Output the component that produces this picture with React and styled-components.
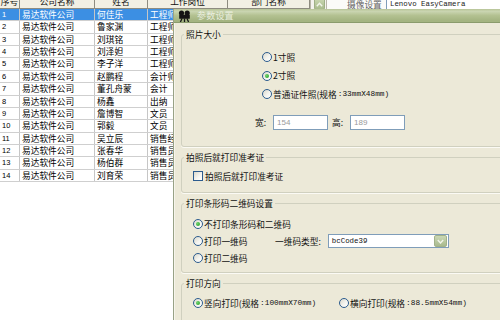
import React from 'react';
import styled, { createGlobalStyle } from 'styled-components';

const CJK = `"Noto Sans CJK SC", "Noto Sans", sans-serif`;
const MONO = `"Liberation Mono", "DejaVu Sans Mono", monospace`;
const COLS = '20px 75px 53px 80px 82px';

const employees = [
    ['1', '何佳乐', '工程师'],
    ['2', '鲁家渊', '工程师'],
    ['3', '刘琪铭', '工程师'],
    ['4', '刘泽妲', '工程师'],
    ['5', '李子洋', '工程师'],
    ['6', '赵鹏程', '会计师'],
    ['7', '董孔舟蒙', '会计'],
    ['8', '杨鑫', '出纳'],
    ['9', '詹博智', '文员'],
    ['10', '郭毅', '文员'],
    ['11', '吴立辰', '销售经理'],
    ['12', '张春华', '销售员'],
    ['13', '杨伯群', '销售员'],
    ['14', '刘育荣', '销售员'],
];

const GlobalStyle = createGlobalStyle`
    html, body {
        margin: 0;
        padding: 0;
        background: #fff;
        font-family: ${CJK};
    }
`;

const CameraIcon = () => (
    <svg width="13" height="12" viewBox="0 0 13 12">
        <circle cx="3.5" cy="3" r="2.6" fill="#141414" />
        <circle cx="9.2" cy="3" r="2.6" fill="#141414" />
        <rect x="1.2" y="4.8" width="10.6" height="4" rx="0.6" fill="#141414" />
        <path d="M4 8.5 L2.4 12 M6.5 8.5 V12 M9 8.5 L10.6 12" stroke="#141414" strokeWidth="1.3" />
    </svg>
);

const Chevron = ({ up }) => (
    <svg width="7" height="5" viewBox="0 0 7 5">
        <path d={up ? 'M0.8 4.2 L3.5 1.2 L6.2 4.2' : 'M0.8 1 L3.5 4 L6.2 1'} fill="none" stroke="#f2f5ea" strokeWidth="1.4" />
    </svg>
);

const App = () => {
    return (
        <Screen>
            <GlobalStyle />
            <Backdrop>
                <Grid>
                    <HeaderRow>
                        <HeaderCell>序号</HeaderCell>
                        <HeaderCell>公司名称</HeaderCell>
                        <HeaderCell>姓名</HeaderCell>
                        <HeaderCell>工作岗位</HeaderCell>
                        <HeaderCell>部门名称</HeaderCell>
                    </HeaderRow>
                    {employees.map(([no, name, job], i) => (
                        <Row key={no} $selected={i === 0}>
                            <NumCell>{no}</NumCell>
                            <Cell>易达软件公司</Cell>
                            <Cell>{name}</Cell>
                            <Cell>{job}</Cell>
                            <Cell />
                        </Row>
                    ))}
                </Grid>
                <ScrollCol>
                    <ScrollButton><Chevron up /></ScrollButton>
                </ScrollCol>
                <SidePanel>
                    <SideLabel>摄像设置</SideLabel>
                    <CameraBox>Lenovo EasyCamera</CameraBox>
                </SidePanel>
            </Backdrop>

            <Dialog>
                <TitleBar>
                    <CameraIcon />
                    <TitleText>参数设置</TitleText>
                </TitleBar>
                <Body>
                    <Group $h={113}>
                        <GroupTitle>照片大小</GroupTitle>
                        <RadioList $mt={8} $ml={80}>
                            <RadioRow $h={18.5}><RadioDot />1寸照</RadioRow>
                            <RadioRow $h={18.5}><RadioDot $on />2寸照</RadioRow>
                            <RadioRow $h={18.5}><RadioDot />普通证件照(规格<Mono>:33mmX48mm)</Mono></RadioRow>
                        </RadioList>
                        <DimRow>
                            <DimLabel>宽:</DimLabel>
                            <NumInput>154</NumInput>
                            <DimLabel $ml={4}>高:</DimLabel>
                            <NumInput>189</NumInput>
                        </DimRow>
                    </Group>

                    <Group $h={36}>
                        <GroupTitle>拍照后就打印准考证</GroupTitle>
                        <CheckRow>
                            <CheckBox />
                            拍照后就打印准考证
                        </CheckRow>
                    </Group>

                    <Group $h={70}>
                        <GroupTitle>打印条形码二维码设置</GroupTitle>
                        <RadioList $mt={6.5} $ml={11}>
                            <RadioRow><RadioDot $on />不打印条形码和二维码</RadioRow>
                            <Line>
                                <RadioRow $w={82}><RadioDot />打印一维码</RadioRow>
                                <TypeLabel>一维码类型:</TypeLabel>
                                <Select>
                                    <SelectValue>bcCode39</SelectValue>
                                    <DropButton><Chevron /></DropButton>
                                </Select>
                            </Line>
                            <RadioRow><RadioDot />打印二维码</RadioRow>
                        </RadioList>
                    </Group>

                    <Group $h={60}>
                        <GroupTitle>打印方向</GroupTitle>
                        <RadioList $mt={5.5} $ml={11}>
                            <Line>
                                <RadioRow $w={146}><RadioDot $on />竖向打印(规格<Mono>:100mmX70mm)</Mono></RadioRow>
                                <RadioRow><RadioDot />横向打印(规格<Mono>:88.5mmX54mm)</Mono></RadioRow>
                            </Line>
                        </RadioList>
                    </Group>
                </Body>
            </Dialog>
        </Screen>
    );
}

export default App;

const Screen = styled.div`
    position: relative;
    width: 500px;
    height: 320px;
    overflow: hidden;
    background: #fff;
`;

const Backdrop = styled.div`
    display: flex;
    margin-top: -5px;
`;

const Grid = styled.div`
    width: 310px;
    flex: none;
`;

const HeaderRow = styled.div`
    display: grid;
    grid-template-columns: ${COLS};
    height: 14px;
    box-sizing: border-box;
    background: #f2f0e4;
    border-bottom: 1px solid #8e8c80;
`;

const HeaderCell = styled.div`
    border-right: 1px solid #8e8c80;
    font-size: 8.7px;
    line-height: 13px;
    text-align: center;
    color: #111;
    white-space: nowrap;
    overflow: hidden;
`;

const Row = styled.div`
    display: grid;
    grid-template-columns: ${COLS};
    height: 12.36px;
    box-sizing: border-box;
    border-bottom: 1px solid #cfcfcf;
    background: ${p => p.$selected ? '#3c8fe3' : '#fff'};
    color: ${p => p.$selected ? '#fff' : '#000'};
`;

const Cell = styled.div`
    border-right: 1px solid #c6c6c6;
    padding-left: 2px;
    font-size: 8.7px;
    line-height: 11.4px;
    white-space: nowrap;
    overflow: hidden;
`;

const NumCell = styled(Cell)`
    font-family: "Liberation Sans", sans-serif;
    font-size: 7.5px;
`;

const ScrollCol = styled.div`
    width: 16px;
    flex: none;
    height: 200px;
    background: #f4f3ee;
    border-left: 1px solid #b8b6a8;
    box-sizing: border-box;
    display: flex;
    flex-direction: column;
    align-items: flex-end;
    padding: 3px 1px 0 0;
`;

const ScrollButton = styled.div`
    width: 9px;
    height: 10px;
    display: flex;
    align-items: center;
    justify-content: center;
    background: linear-gradient(#c9d7b0, #a9bb8d);
    border: 1px solid #9fb086;
    border-radius: 2px;
`;

const SidePanel = styled.div`
    flex: 1;
    height: 14px;
    display: flex;
    align-items: center;
    background: #fbfbf8;
    border-left: 1px solid #b8b6a8;
    box-sizing: border-box;
    padding-top: 4px;
`;

const SideLabel = styled.div`
    margin-left: 20px;
    width: 39px;
    font-size: 8.7px;
    color: #666;
    white-space: nowrap;
`;

const CameraBox = styled.div`
    flex: 1;
    height: 100%;
    border-left: 1px solid #7f9db9;
    background: #fff;
    padding-left: 3px;
    font-family: ${MONO};
    font-size: 7.4px;
    line-height: 10px;
    color: #222;
    white-space: nowrap;
`;

const Dialog = styled.div`
    position: absolute;
    left: 173px;
    top: 9px;
    width: 330px;
    height: 330px;
    background: #ece9d8;
    border-left: 1px solid #98a286;
    box-shadow: inset 1px 0 0 #f7f5ec;
    display: flex;
    flex-direction: column;
`;

const TitleBar = styled.div`
    height: 19px;
    box-sizing: border-box;
    display: flex;
    align-items: center;
    gap: 6px;
    padding-left: 4px;
    background: linear-gradient(#b7c497 0%, #cad5b1 18%, #b3c191 50%, #a4b481 88%);
    border-bottom: 1px solid #8a9b6c;
`;

const TitleText = styled.div`
    font-size: 9px;
    color: #f3f6ea;
    opacity: 0.85;
    letter-spacing: 0.2px;
`;

const Body = styled.div`
    display: flex;
    flex-direction: column;
    gap: 10px;
    padding: 11px 0 0 7px;
`;

const Group = styled.div`
    height: ${p => p.$h}px;
    box-sizing: border-box;
    border: 1px solid #d0d0bf;
    border-radius: 3px;
    box-shadow: 0 1px 0 #fbfaf4;
    display: flex;
    flex-direction: column;
    align-items: flex-start;
`;

const GroupTitle = styled.div`
    margin: -6px 0 0 2px;
    padding: 0 2px;
    background: #ece9d8;
    font-size: 8.7px;
    line-height: 11px;
    color: #111;
    white-space: nowrap;
`;

const RadioList = styled.div`
    display: flex;
    flex-direction: column;
    margin: ${p => p.$mt}px 0 0 ${p => p.$ml}px;
`;

const Line = styled.div`
    display: flex;
    align-items: center;
`;

const RadioRow = styled.div`
    display: flex;
    align-items: center;
    gap: 1px;
    height: ${p => p.$h || 17}px;
    width: ${p => p.$w ? `${p.$w}px` : 'auto'};
    font-size: 8.7px;
    color: #111;
    white-space: nowrap;
`;

const RadioDot = styled.span`
    width: 10px;
    height: 10px;
    box-sizing: border-box;
    flex: none;
    border: 1px solid #2b5b8e;
    border-radius: 50%;
    background: linear-gradient(135deg, #d9d7cb 0%, #f4f4ef 55%, #fff 100%);
    display: flex;
    align-items: center;
    justify-content: center;

    &::after {
        content: '';
        width: 4px;
        height: 4px;
        border-radius: 50%;
        background: ${p => p.$on ? 'radial-gradient(circle at 35% 35%, #6fd36f, #1f9a1f)' : 'transparent'};
    }
`;

const Mono = styled.span`
    font-family: ${MONO};
    font-size: 7.8px;
`;

const DimRow = styled.div`
    display: flex;
    align-items: center;
    margin: 11.5px 0 0 73px;
`;

const DimLabel = styled.div`
    width: 18px;
    margin-left: ${p => p.$ml || 0}px;
    font-size: 8.7px;
    color: #111;
`;

const NumInput = styled.div`
    width: 55px;
    height: 15px;
    box-sizing: border-box;
    border: 1px solid #7f9db9;
    background: #fff;
    padding-left: 3px;
    font-family: "Liberation Sans", sans-serif;
    font-size: 8px;
    line-height: 13px;
    color: #9a9a9a;
`;

const CheckRow = styled.div`
    display: flex;
    align-items: center;
    gap: 2px;
    height: 14px;
    margin: 6px 0 0 11px;
    font-size: 8.7px;
    color: #111;
    white-space: nowrap;
`;

const CheckBox = styled.span`
    width: 10px;
    height: 10px;
    box-sizing: border-box;
    border: 1px solid #2b5b8e;
    background: linear-gradient(135deg, #dad8cc 0%, #f6f6f2 60%, #fff 100%);
`;

const TypeLabel = styled.div`
    font-size: 8.7px;
    color: #111;
    margin-right: 7px;
    white-space: nowrap;
`;

const Select = styled.div`
    width: 121px;
    height: 14px;
    box-sizing: border-box;
    border: 1px solid #7f9db9;
    background: #fff;
    display: flex;
    align-items: center;
    justify-content: space-between;
    padding: 0 1px 0 3px;
`;

const SelectValue = styled.span`
    font-family: ${MONO};
    font-size: 7.4px;
    color: #111;
`;

const DropButton = styled.span`
    width: 11px;
    height: 10px;
    display: flex;
    align-items: center;
    justify-content: center;
    background: linear-gradient(#cbd8b5, #a9ba8e);
    border: 1px solid #a2b289;
    border-radius: 2px;
`;
